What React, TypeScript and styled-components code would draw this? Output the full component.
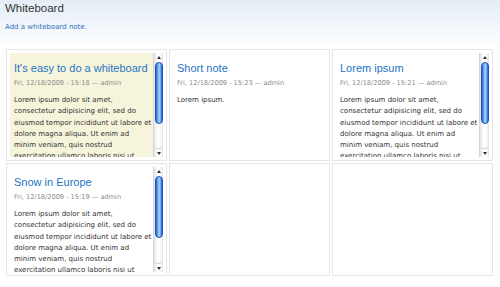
import React from 'react';
import styled, { createGlobalStyle } from 'styled-components';

const GlobalStyle = createGlobalStyle`
  html, body {
    margin: 0;
    padding: 0;
  }
  body {
    width: 500px;
    height: 287px;
    overflow: hidden;
    background: linear-gradient(to bottom, #e4edf6 0px, #f3f7fb 28px, #ffffff 46px);
    font-family: "DejaVu Sans", Verdana, sans-serif;
  }
`;

const Page = styled.div`
  padding: 1px 6px 0 6px;
`;

const Title = styled.h1`
  margin: 0 0 0 -1px;
  font-family: "Liberation Sans", Arial, sans-serif;
  font-size: 11.5px;
  line-height: 14px;
  font-weight: normal;
  color: #333;
`;

const AddLink = styled.a`
  display: block;
  margin: 7px 0 0 -1px;
  font-size: 7px;
  line-height: 10px;
  color: #2a70bd;
  text-decoration: none;
`;

const Board = styled.div`
  margin-top: 17px;
  display: grid;
  grid-template-columns: repeat(3, 161px);
  grid-template-rows: 112px 113px;
  gap: 2px;
`;

const Cell = styled.div`
  border: 1px solid #e6e6e6;
  padding: 3px;
  display: flex;
  background: #fff;
`;

const Note = styled.div<{ $highlight?: boolean }>`
  flex: 1;
  display: flex;
  overflow: hidden;
  background: ${(p) => (p.$highlight ? '#f6f4db' : '#fff')};
`;

const NoteBody = styled.div`
  flex: 1;
  overflow: hidden;
  padding: 8px 1px 0 4px;
`;

const NoteTitle = styled.h2`
  margin: 0;
  font-family: "Liberation Sans", Arial, sans-serif;
  font-size: 11px;
  line-height: 14px;
  font-weight: normal;
  color: #1e74c6;
`;

const Meta = styled.div`
  margin-top: 3px;
  font-size: 6.6px;
  line-height: 10px;
  color: #8a8a8a;
`;

const Text = styled.p`
  margin: 7px 0 0 0;
  font-size: 7px;
  line-height: 11.25px;
  color: #333;
`;

const ScrollBar = styled.div`
  width: 9px;
  display: flex;
  flex-direction: column;
  background: linear-gradient(to right, #e2e2e2, #ffffff 35%, #ffffff 65%, #e4e4e4);
  border-left: 1px solid #d6d6d6;
`;

const Arrow = styled.div<{ $down?: boolean }>`
  height: 8px;
  display: flex;
  align-items: center;
  justify-content: center;
  &::after {
    content: '';
    border-left: 2px solid transparent;
    border-right: 2px solid transparent;
    ${(p) => (p.$down ? 'border-top: 3px solid #333;' : 'border-bottom: 3px solid #333;')}
  }
`;

const Track = styled.div`
  flex: 1;
  padding: 1px 0 0 0;
  display: flex;
  flex-direction: column;
  border-bottom: 1px solid #cfcfcf;
  border-radius: 0 0 5px 5px;
`;

const Thumb = styled.div`
  height: 60px;
  margin: 0 0.5px;
  border: 1px solid #1b52b8;
  border-radius: 5px;
  background: linear-gradient(to right, #2a62cf, #79b0f3 35%, #a9d2fb 55%, #6ea6ef 75%, #2a62cf);
`;

type NoteData = {
  title: string;
  meta: string;
  text: string;
  highlight?: boolean;
  scroll?: boolean;
};

const lorem =
  'Lorem ipsum dolor sit amet, consectetur adipisicing elit, sed do eiusmod tempor incididunt ut labore et dolore magna aliqua. Ut enim ad minim veniam, quis nostrud exercitation ullamco laboris nisi ut aliquip ex ea commodo consequat.';

const notes: (NoteData | null)[] = [
  { title: "It's easy to do a whiteboard", meta: 'Fri, 12/18/2009 - 15:18 — admin', text: lorem, highlight: true, scroll: true },
  { title: 'Short note', meta: 'Fri, 12/18/2009 - 15:23 — admin', text: 'Lorem ipsum.' },
  { title: 'Lorem ipsum', meta: 'Fri, 12/18/2009 - 15:21 — admin', text: lorem, scroll: true },
  { title: 'Snow in Europe', meta: 'Fri, 12/18/2009 - 15:19 — admin', text: lorem, scroll: true },
  null,
  null,
];

function Scroller() {
  return (
    <ScrollBar>
      <Arrow />
      <Track>
        <Thumb />
      </Track>
      <Arrow $down />
    </ScrollBar>
  );
}

export default function App() {
  return (
    <>
      <GlobalStyle />
      <Page>
        <Title>Whiteboard</Title>
        <AddLink href="#">Add a whiteboard note.</AddLink>
        <Board>
          {notes.map((note, i) => (
            <Cell key={i}>
              {note && (
                <Note $highlight={note.highlight}>
                  <NoteBody>
                    <NoteTitle>{note.title}</NoteTitle>
                    <Meta>{note.meta}</Meta>
                    <Text>{note.text}</Text>
                  </NoteBody>
                  {note.scroll && <Scroller />}
                </Note>
              )}
            </Cell>
          ))}
        </Board>
      </Page>
    </>
  );
}
